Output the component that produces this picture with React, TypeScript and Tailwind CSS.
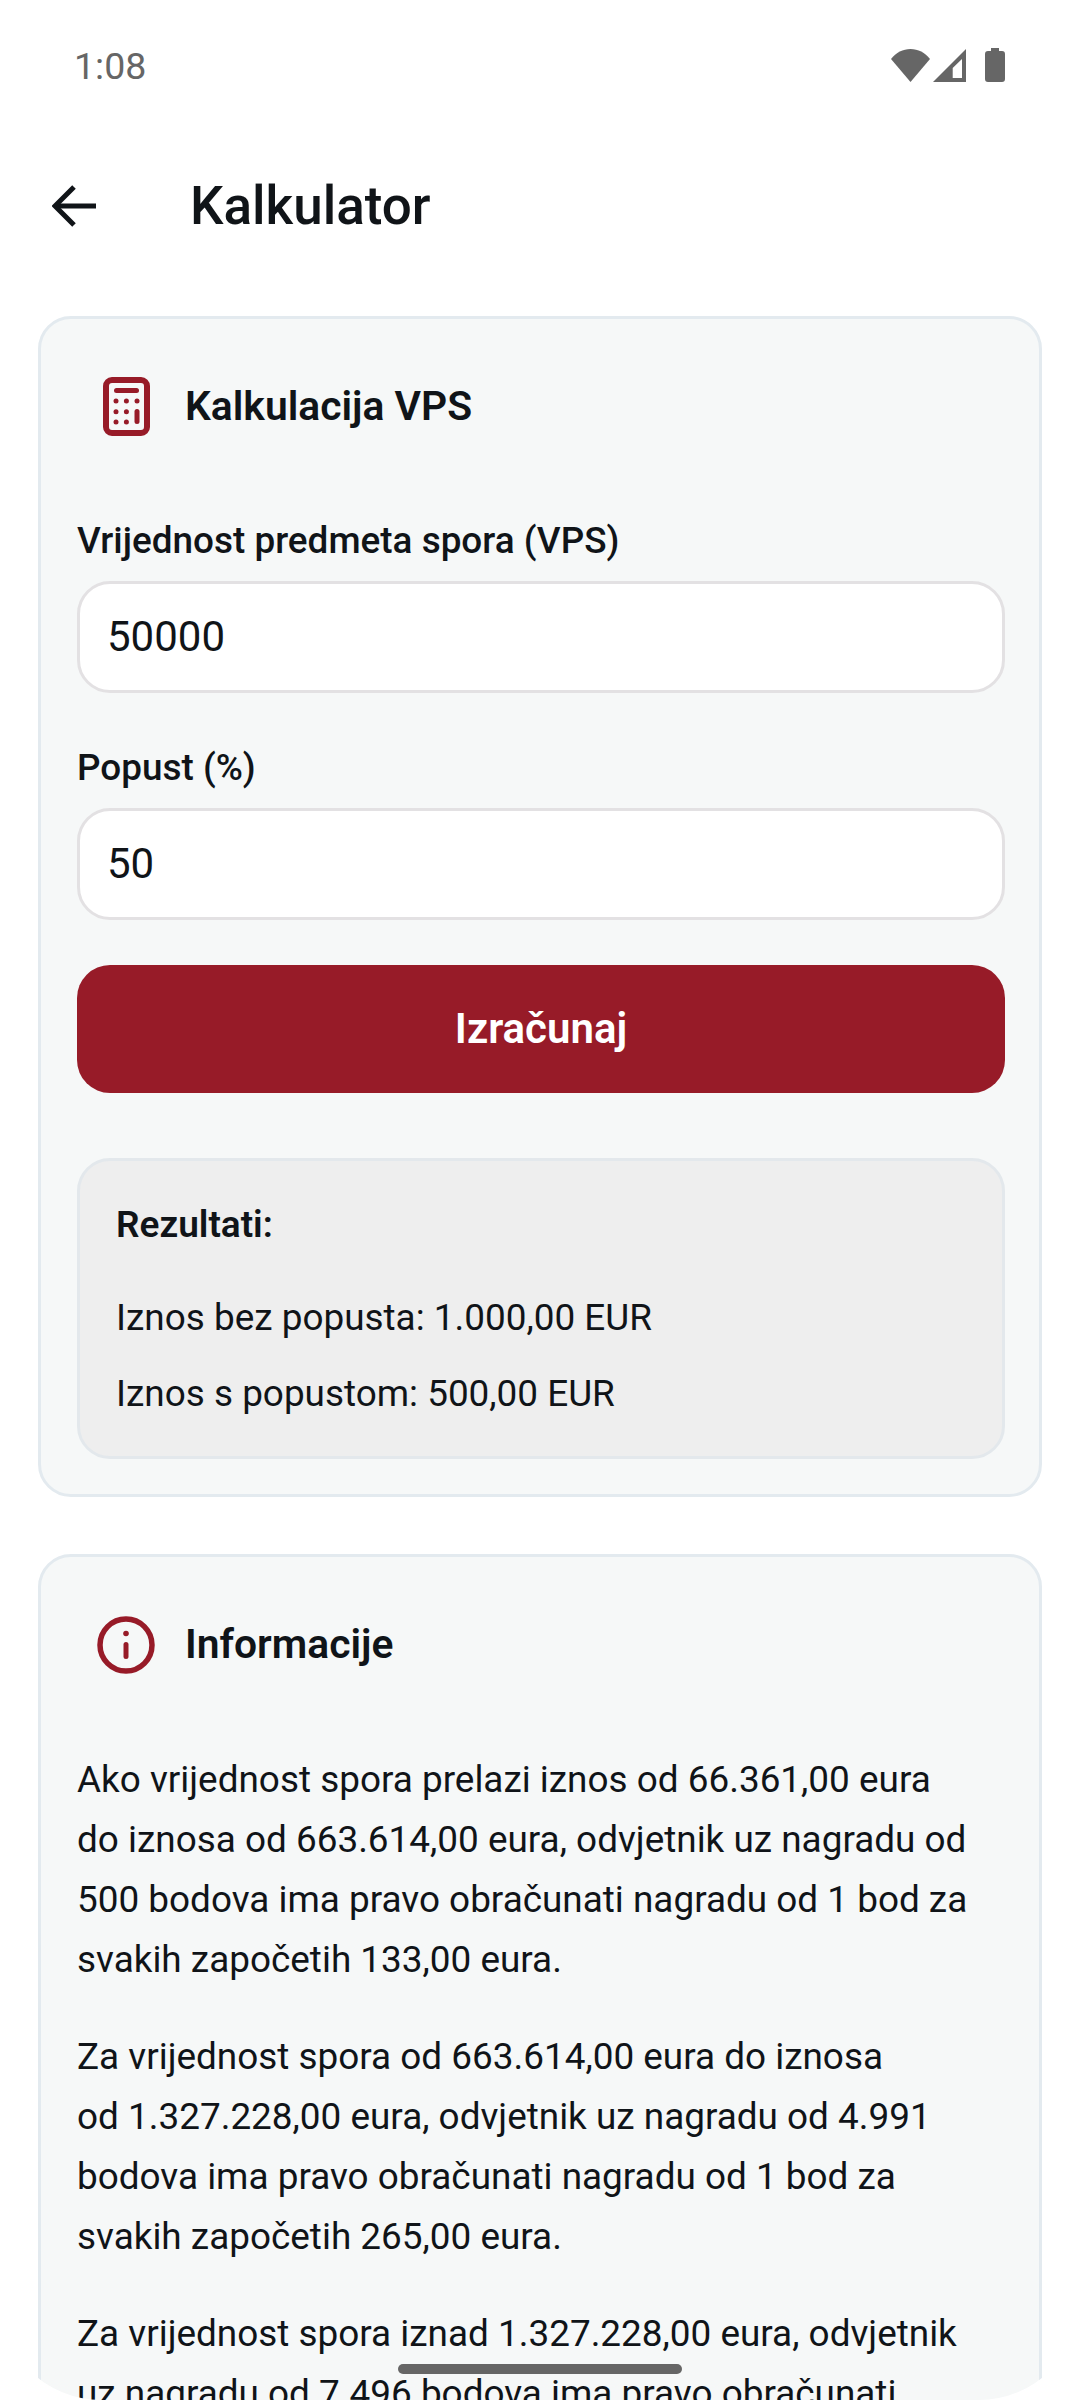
function CalculatorIcon() {
  return (
    <svg width="47" height="59" viewBox="0 0 47 59" fill="#971b28">
      <rect x="3" y="3" width="41" height="53" rx="6" fill="none" stroke="#971b28" strokeWidth="6" />
      <rect x="11" y="11" width="25" height="5" rx="2.5" />
      <circle cx="13" cy="24" r="2.5" />
      <circle cx="23.4" cy="24" r="2.5" />
      <circle cx="34" cy="24" r="2.5" />
      <circle cx="13" cy="34.7" r="2.5" />
      <circle cx="23.4" cy="34.7" r="2.5" />
      <circle cx="13" cy="45" r="2.5" />
      <circle cx="23.4" cy="45" r="2.5" />
      <rect x="31.5" y="32" width="5" height="15" rx="2.5" />
    </svg>
  );
}

function InfoIcon() {
  return (
    <svg width="58" height="58" viewBox="0 0 58 58" fill="#971b28">
      <circle cx="29" cy="29" r="26" fill="none" stroke="#971b28" strokeWidth="5.5" />
      <circle cx="29" cy="17.5" r="2.8" />
      <rect x="26.5" y="26" width="5" height="17" rx="2.5" />
    </svg>
  );
}

function StatusIcons() {
  return (
    <div className="flex items-center">
      <svg width="39" height="33" viewBox="0 0 39 33" fill="#666666">
        <path d="M0 10C5 3.500 12 0 19.500 0S34 3.500 39 10L19.500 33Z" />
      </svg>
      <svg className="ml-[3px]" width="33" height="33" viewBox="0 0 33 33" fill="#666666">
        <path fillRule="evenodd" d="M33 0V33H0ZM29 10 19.700 19V29H29Z" />
      </svg>
      <svg className="ml-[19px]" width="20" height="34" viewBox="0 0 20 34" fill="#666666">
        <path d="M6 0H14V3H17Q20 3 20 6V31Q20 34 17 34H3Q0 34 0 31V6Q0 3 3 3H6Z" />
      </svg>
    </div>
  );
}

function ArrowBack() {
  return (
    <svg width="44" height="42" viewBox="0 0 44 42" fill="none" stroke="#101418" strokeWidth="5">
      <path d="M44 21H4" />
      <path d="M22 2 3 21 22 40" />
    </svg>
  );
}

function Field({ label, value }: { label: string; value: string }) {
  return (
    <div>
      <div className="flex h-[52px] items-center pt-[2px] text-[36.9px] font-medium text-[#101418]">{label}</div>
      <div className="mt-[15px] flex h-[112px] items-center rounded-[33px] border-[3px] border-[#e3e1e3] bg-white pb-[2px] pl-[27px] text-[42px] text-[#101418]">
        {value}
      </div>
    </div>
  );
}

export default function App() {
  return (
    <div className="relative h-[2400px] w-[1080px] overflow-hidden bg-white [font-family:Roboto,sans-serif]">
      <div className="flex h-[130px] items-center justify-between pl-[74px] pr-[75px]">
        <span className="pt-[2px] text-[37.5px] text-[#666666]">1:08</span>
        <StatusIcons />
      </div>

      <div className="flex h-[152px] items-center pl-[52px]">
        <ArrowBack />
        <h1 className="ml-[94px] pt-[2px] text-[53px] font-medium text-[#101418]">Kalkulator</h1>
      </div>

      <section className="mx-[38px] mt-[34px] rounded-[33px] border-[3px] border-[#e3eaef] bg-[#f6f8f8] pb-[35px] pl-[36px] pr-[34px] pt-[54px]">
        <div className="flex h-[66px] items-center">
          <div className="ml-[16px] flex w-[66px] justify-center">
            <CalculatorIcon />
          </div>
          <h2 className="ml-[26px] pt-[2px] text-[40.8px] font-semibold text-[#101418]">Kalkulacija VPS</h2>
        </div>

        <div className="mt-[75px]">
          <Field label="Vrijednost predmeta spora (VPS)" value="50000" />
        </div>
        <div className="mt-[48px]">
          <Field label="Popust (%)" value="50" />
        </div>

        <button className="mt-[45px] flex h-[128px] w-full items-center justify-center rounded-[33px] bg-[#971b28] pb-[2px] text-[42px] font-semibold text-white">
          Izračunaj
        </button>

        <div className="mt-[65px] h-[301px] rounded-[33px] border-[3px] border-[#e3e8ec] bg-[#eeeeee] px-[36px] pt-[38px]">
          <div className="flex h-[52px] items-center text-[37px] font-semibold text-[#101418]">Rezultati:</div>
          <div className="mt-[41px] flex h-[52px] items-center text-[36.9px] text-[#101418]">
            Iznos bez popusta: 1.000,00 EUR
          </div>
          <div className="mt-[24px] flex h-[52px] items-center text-[36.9px] text-[#101418]">
            Iznos s popustom: 500,00 EUR
          </div>
        </div>
      </section>

      <section className="mx-[38px] mt-[57px] rounded-[33px] border-[3px] border-[#e3eaef] bg-[#f6f8f8] pb-[35px] pl-[36px] pr-[34px] pt-[55px]">
        <div className="flex h-[66px] items-center">
          <div className="ml-[16px] flex w-[66px] justify-center">
            <InfoIcon />
          </div>
          <h2 className="ml-[26px] text-[40.8px] font-semibold text-[#101418]">Informacije</h2>
        </div>

        <div className="mt-[72px] w-[895px] space-y-[37px] text-[36.9px] leading-[60px] text-[#101418]">
          <p>
            Ako vrijednost spora prelazi iznos od 66.361,00 eura do iznosa od 663.614,00 eura, odvjetnik uz nagradu od
            500 bodova ima pravo obračunati nagradu od 1 bod za svakih započetih 133,00 eura.
          </p>
          <p>
            Za vrijednost spora od 663.614,00 eura do iznosa od&nbsp;1.327.228,00 eura, odvjetnik uz nagradu od 4.991
            bodova ima pravo obračunati nagradu od 1 bod za svakih započetih 265,00 eura.
          </p>
          <p>
            Za vrijednost spora iznad 1.327.228,00 eura, odvjetnik uz nagradu od 7.496 bodova ima pravo obračunati
            nagradu od 1 bod za svakih započetih 531,00 eura.
          </p>
        </div>
      </section>

      {/* rounded display corners and gesture bar sit on top of the page */}
      <svg className="absolute bottom-0 left-0" width="101" height="101" viewBox="0 0 101 101" fill="white">
        <path d="M0 0V101H101A101 101 0 0 1 0 0Z" />
      </svg>
      <svg className="absolute bottom-0 right-0" width="101" height="101" viewBox="0 0 101 101" fill="white">
        <path d="M101 0V101H0A101 101 0 0 0 101 0Z" />
      </svg>
      <div className="absolute bottom-[26px] left-[398px] h-[10px] w-[284px] rounded-full bg-[#666666]" />
    </div>
  );
}
